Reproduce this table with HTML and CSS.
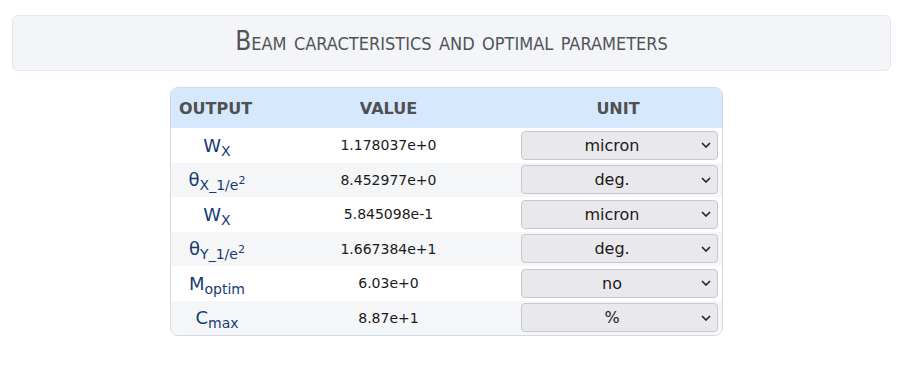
FILE: index.html
```html
<!DOCTYPE html>
<html>
<head>
<meta charset="utf-8">
<link rel="stylesheet" href="styles.css">
</head>
<body>
<div class="page">
  <div class="title-box">
    <h2 class="title">Beam caracteristics and optimal parameters</h2>
  </div>
  <div class="table-wrap">
    <table class="results">
      <colgroup>
        <col class="c-out">
        <col class="c-val">
        <col class="c-unit">
      </colgroup>
      <thead>
        <tr>
          <th class="h-out">OUTPUT</th>
          <th>VALUE</th>
          <th>UNIT</th>
        </tr>
      </thead>
      <tbody>
        <tr>
          <td class="name">W<sub>X</sub></td>
          <td class="val">1.178037e+0</td>
          <td class="unit"><select class="sel"><option>micron</option></select></td>
        </tr>
        <tr>
          <td class="name">θ<sub>X_1/e<sup>2</sup></sub></td>
          <td class="val">8.452977e+0</td>
          <td class="unit"><select class="sel"><option>deg.</option></select></td>
        </tr>
        <tr>
          <td class="name">W<sub>X</sub></td>
          <td class="val">5.845098e-1</td>
          <td class="unit"><select class="sel"><option>micron</option></select></td>
        </tr>
        <tr>
          <td class="name">θ<sub>Y_1/e<sup>2</sup></sub></td>
          <td class="val">1.667384e+1</td>
          <td class="unit"><select class="sel"><option>deg.</option></select></td>
        </tr>
        <tr>
          <td class="name">M<sub>optim</sub></td>
          <td class="val">6.03e+0</td>
          <td class="unit"><select class="sel"><option>no</option></select></td>
        </tr>
        <tr>
          <td class="name">C<sub>max</sub></td>
          <td class="val">8.87e+1</td>
          <td class="unit"><select class="sel"><option>%</option></select></td>
        </tr>
      </tbody>
    </table>
  </div>
</div>
</body>
</html>
```

FILE: styles.css
```css
* { box-sizing: border-box; }
html, body { margin: 0; padding: 0; background: #fff; }
body { font-family: "DejaVu Sans", Verdana, sans-serif; color: #212529; }
.page { padding: 15px 18px 0 12px; }
.title-box {
  background: #f4f5f8;
  border: 1px solid #e3e6ea;
  border-radius: 6px;
  height: 56px;
  display: flex;
  align-items: center;
  justify-content: center;
}
.title {
  margin: 0;
  font-family: "DejaVu Sans", sans-serif;
  font-stretch: condensed;
  font-variant: small-caps;
  font-weight: normal;
  font-size: 26px;
  line-height: 30px;
  color: #505357;
  padding-bottom: 5px;
}
.table-wrap {
  display: flex;
  justify-content: center;
  margin-top: 16px;
  padding-right: 10px;
}
.results {
  width: 553px;
  border-collapse: separate;
  border-spacing: 0;
  border: 1px solid #cfdbe8;
  border-radius: 8px;
  overflow: hidden;
}
.c-out { width: 92px; }
.c-val { width: 252px; }
.c-unit { width: 208px; }
.results thead th {
  background: #d6e8fd;
  height: 40px;
  font-size: 16px;
  font-weight: bold;
  color: #505050;
  text-align: center;
  padding: 0 4px;
}
.results thead th.h-out { text-align: left; padding-left: 8px; }
.results tbody tr { height: 34.5px; }
.results tbody tr:nth-child(even) td { background: #f5f6f8; }
.results tbody tr:nth-child(odd) td { background: #fff; }
.results td { padding: 0; text-align: center; vertical-align: middle; }
.name {
  color: #183a73;
  font-size: 18px;
  font-family: "DejaVu Sans", sans-serif;
}
.name sub { font-size: 14px; vertical-align: -4px; line-height: 0; }
.name sup { font-size: 11px; vertical-align: 6px; line-height: 0; }
.val { font-size: 14px; color: #1a1a1a; }
.unit { padding-left: 6px !important; padding-right: 4px !important; }
.sel {
  appearance: none;
  -webkit-appearance: none;
  width: 197px;
  height: 29px;
  background-color: #e9e9ed;
  border: 1px solid #c8c8cc;
  border-radius: 4px;
  font-family: "DejaVu Sans", sans-serif;
  font-size: 16px;
  color: #1a1a1a;
  text-align: center;
  text-align-last: center;
  padding: 0 20px 0 6px;
  background-image: url("data:image/svg+xml;utf8,<svg xmlns='http://www.w3.org/2000/svg' width='10' height='6' viewBox='0 0 10 6'><path d='M1 1l4 4 4-4' fill='none' stroke='%23222' stroke-width='1.6'/></svg>");
  background-repeat: no-repeat;
  background-position: right 6px center;
}
```
